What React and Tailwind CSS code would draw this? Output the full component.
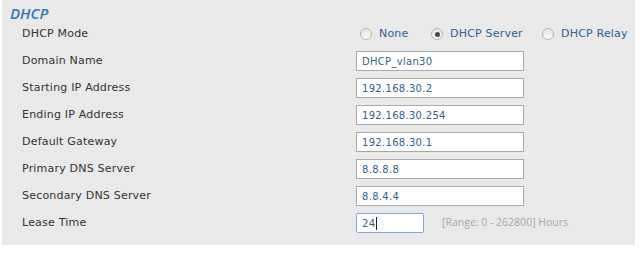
import React from 'react';

const fields = [
    { label: 'Domain Name', value: 'DHCP_vlan30' },
    { label: 'Starting IP Address', value: '192.168.30.2' },
    { label: 'Ending IP Address', value: '192.168.30.254' },
    { label: 'Default Gateway', value: '192.168.30.1' },
    { label: 'Primary DNS Server', value: '8.8.8.8' },
    { label: 'Secondary DNS Server', value: '8.8.4.4' },
];

const Radio = ({ checked, label, width }) => (
    <div className={`flex items-center gap-[7px] whitespace-nowrap ${width}`}>
        <span className="w-[12px] h-[12px] shrink-0 rounded-full border border-[#b5b5b5] bg-gradient-to-b from-[#e4e4e4] to-[#fafafa] flex items-center justify-center">
            {checked && <span className="w-[5px] h-[5px] rounded-full bg-[#4a4a4a]" />}
        </span>
        <span className="text-[#2f5f93]">{label}</span>
    </div>
);

export default function App() {
    return (
        <div className="w-[640px] h-[256px] bg-white" style={{ fontFamily: '"DejaVu Sans", Verdana, sans-serif' }}>
            <div className="ml-[2px] w-[633px] h-[245px] bg-[#e9e9e9] pl-[8px] pt-[4px] text-[11px] tracking-[0.2px]">
                {/* Titre de section */}
                <div className="h-[18px] leading-[18px] text-[15px] font-semibold italic text-[#2f77bd] tracking-normal" style={{ fontFamily: '"Open Sans", sans-serif' }}>
                    DHCP
                </div>

                <div className="pl-[12px] grid grid-cols-[334px_1fr] gap-y-[7px] mt-[2px]">
                    <div className="h-[20px] flex items-center text-[#333]">DHCP Mode</div>
                    <div className="h-[20px] flex items-center pl-[4px]">
                        <Radio label="None" width="w-[71px]" />
                        <Radio checked label="DHCP Server" width="w-[111px]" />
                        <Radio label="DHCP Relay" width="" />
                    </div>

                    {fields.map((f) => (
                        <React.Fragment key={f.label}>
                            <div className="h-[20px] flex items-center text-[#333]">{f.label}</div>
                            <div className="h-[20px]">
                                <div className="w-[168px] h-[20px] border border-[#a9a9a9] bg-white flex items-center pl-[5px] text-[10px] tracking-[0.3px] text-[#33618f]">
                                    {f.value}
                                </div>
                            </div>
                        </React.Fragment>
                    ))}

                    <div className="h-[20px] flex items-center text-[#333]">Lease Time</div>
                    <div className="h-[20px] flex items-center">
                        <div className="w-[68px] h-[20px] border border-[#7fa9dc] rounded-[2px] bg-white flex items-center pl-[5px] text-[10px] tracking-[0.3px] text-[#33618f]">
                            24<span className="w-px h-[13px] bg-[#222] ml-px" />
                        </div>
                        <span className="ml-[18px] text-[10.5px] text-[#a6a6a6] tracking-normal" style={{ fontFamily: '"Open Sans", sans-serif' }}>
                            [Range: 0 - 262800] Hours
                        </span>
                    </div>
                </div>
            </div>
        </div>
    );
}
